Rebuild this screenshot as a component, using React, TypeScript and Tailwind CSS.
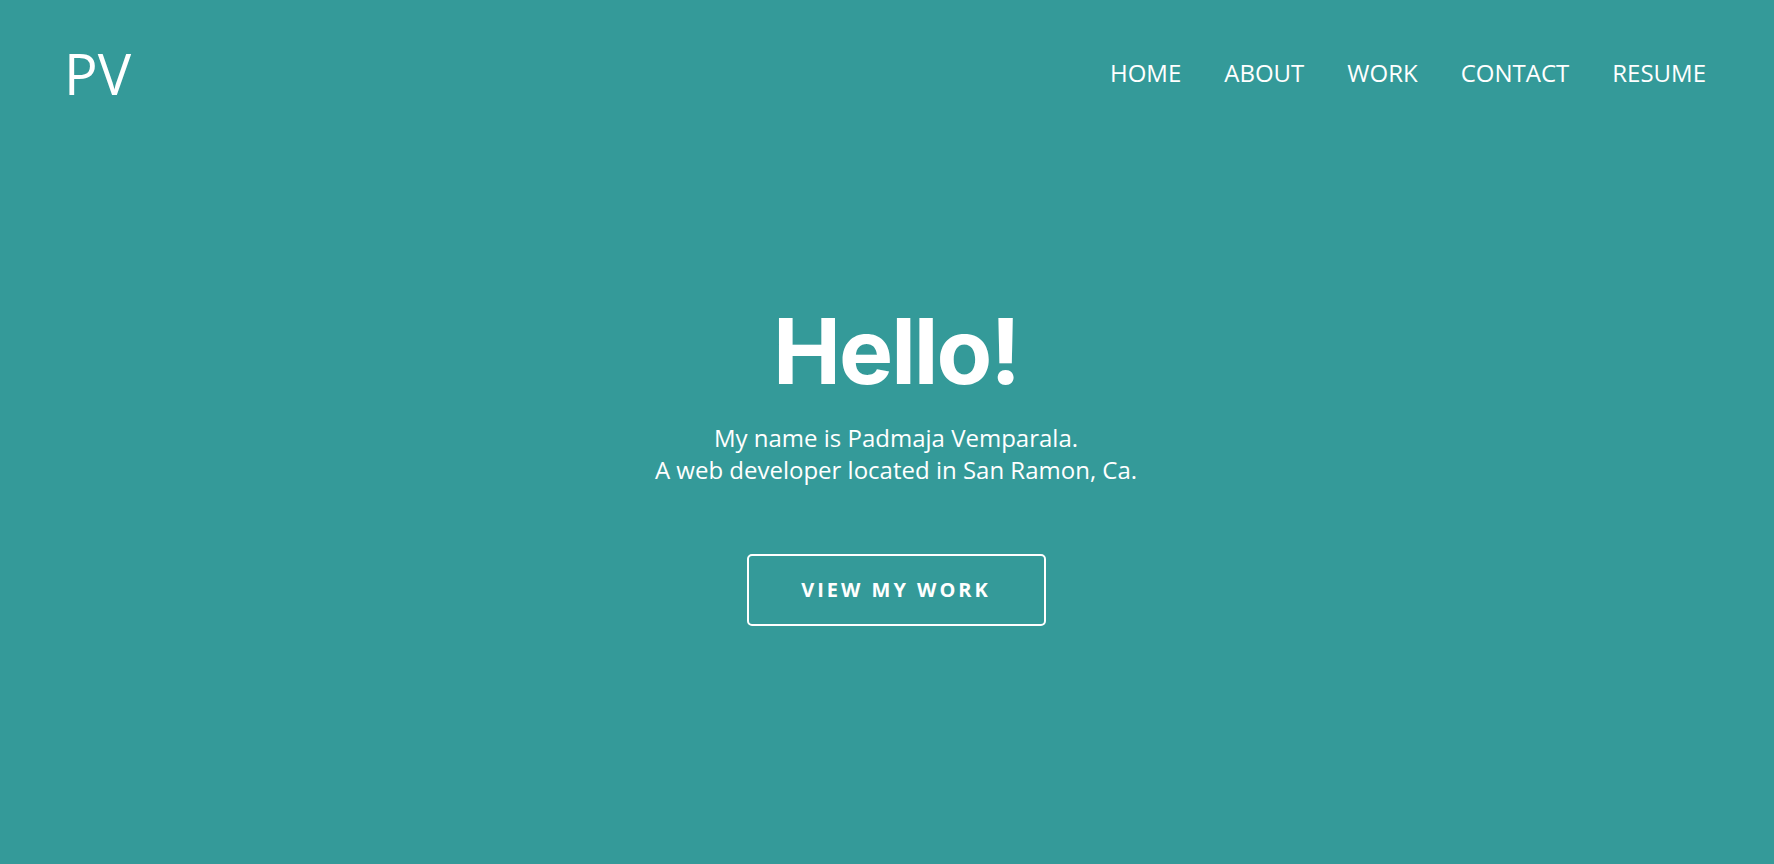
const navItems = ["HOME", "ABOUT", "WORK", "CONTACT", "RESUME"];

const App = () => {
  return (
    <div className="min-h-screen h-[864px] bg-[#349a99] text-white font-['Open_Sans',sans-serif]">
      <header className="flex justify-between items-center h-[146px] pl-16 pr-[68px]">
        <a className="text-[56px] leading-none">PV</a>
        <nav className="flex gap-[43px] text-[24px]">
          {navItems.map((item) => (
            <a key={item} className="cursor-pointer">
              {item}
            </a>
          ))}
        </nav>
      </header>

      <section className="flex flex-col items-center text-center pl-[18px]">
        <h1 className="mt-[160px] text-[91px] leading-none font-bold tracking-[-2px] font-['Inter',sans-serif]">
          Hello!
        </h1>
        <p className="mt-[25px] text-[24px] leading-[32px]">
          My name is Padmaja Vemparala.
          <br />
          A web developer located in San Ramon, Ca.
        </p>
        <button className="mt-[68px] w-[299px] h-[72px] border-2 border-white rounded-[5px] text-[20px] font-bold tracking-[3px]">
          VIEW MY WORK
        </button>
      </section>
    </div>
  );
};

export default App;
